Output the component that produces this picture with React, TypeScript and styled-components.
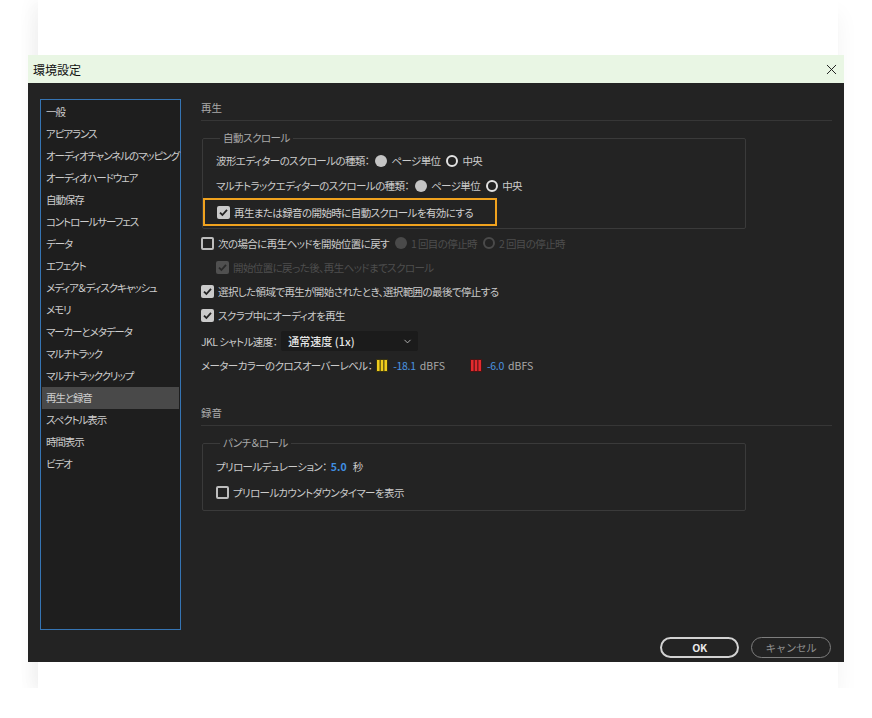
import styled, { createGlobalStyle } from 'styled-components';
import { X, ChevronDown } from 'lucide-react';

const GlobalStyle = createGlobalStyle`
  body {
    margin: 0;
    background: #ffffff;
    font-family: "Noto Sans CJK JP", "Noto Sans", sans-serif;
    font-feature-settings: "palt";
  }
`;

const Card = styled.div`
  margin-left: 38px;
  width: 800px;
  padding: 55px 0 26px;
  background: #ffffff;
  box-shadow: 0 14px 22px rgba(0, 0, 0, 0.05), -8px 0 14px rgba(0, 0, 0, 0.03);
`;

const Dialog = styled.div`
  margin: 0 -6px 0 -10px;
`;

const TitleBar = styled.div`
  height: 28px;
  display: flex;
  align-items: center;
  justify-content: space-between;
  padding: 0 4px 0 5px;
  background: #e9f6e4;
  color: #111;
  font-size: 12px;
`;

const Body = styled.div`
  height: 579px;
  box-sizing: border-box;
  padding: 16px 12px 4px 12px;
  background: #232323;
  display: flex;
  flex-direction: column;
`;

const Main = styled.div`
  height: 531px;
  display: flex;
  gap: 20px;
`;

const Sidebar = styled.ul`
  width: 141px;
  box-sizing: border-box;
  margin: 0;
  padding: 1px 0 0;
  list-style: none;
  background: #1e1e1e;
  border: 1px solid #3574b3;
`;

const NavItem = styled.li<{ $active?: boolean }>`
  height: 22px;
  line-height: 22px;
  margin: 0 1px;
  padding-left: 4px;
  font-size: 10.5px;
  letter-spacing: -1.1px;
  color: #cdcdcd;
  white-space: nowrap;
  background: ${p => (p.$active ? '#494949' : 'transparent')};
`;

const Content = styled.div`
  flex: 1;
  display: flex;
  flex-direction: column;
`;

const Heading = styled.div<{ $top?: number }>`
  margin-top: ${p => p.$top ?? 0}px;
  height: 18px;
  line-height: 18px;
  padding-bottom: 3px;
  font-size: 10.5px;
  color: #a9a9a9;
  border-bottom: 1px solid #363636;
`;

const Group = styled.fieldset<{ $top: number; $bottom: number }>`
  margin: ${p => p.$top}px 0 0 1px;
  width: 544px;
  min-width: 0;
  box-sizing: border-box;
  padding: 0 13px ${p => p.$bottom}px;
  border: 1px solid #3a3a3a;
  border-radius: 2px;
`;

const Legend = styled.legend`
  margin-left: 4px;
  padding: 0 3px;
  line-height: 16px;
  font-size: 10.5px;
  letter-spacing: -0.5px;
  color: #a9a9a9;
`;

const Row = styled.div<{ $h?: number; $indent?: number; $top?: number }>`
  height: ${p => p.$h ?? 24}px;
  margin-top: ${p => p.$top ?? 0}px;
  padding-left: ${p => p.$indent ?? 0}px;
  display: flex;
  align-items: center;
  font-size: 10.5px;
  letter-spacing: -0.6px;
  color: #cbcbcb;
  white-space: nowrap;
`;

const Highlight = styled.div`
  width: 294px;
  height: 28px;
  box-sizing: border-box;
  margin-left: -13px;
  padding-left: 12px;
  border: 2px solid #f0a21e;
  display: flex;
  align-items: center;
  font-size: 10.5px;
  letter-spacing: -0.6px;
  color: #d0d0d0;
  white-space: nowrap;
`;

const Box = styled.span<{ $checked?: boolean; $disabled?: boolean }>`
  width: 13px;
  height: 13px;
  box-sizing: border-box;
  margin-right: 4px;
  border-radius: 2px;
  display: inline-flex;
  align-items: center;
  justify-content: center;
  flex-shrink: 0;
  background: ${p => (p.$checked ? (p.$disabled ? '#505050' : '#cacaca') : 'transparent')};
  border: ${p => (p.$checked ? 'none' : '2px solid #bdbdbd')};
`;

const Radio = styled.span<{ $on?: boolean; $dim?: boolean }>`
  width: 12px;
  height: 12px;
  box-sizing: border-box;
  border-radius: 50%;
  margin: 0 4px 0 6px;
  flex-shrink: 0;
  background: ${p => (p.$on ? (p.$dim ? '#4a4a4a' : '#c4c4c4') : 'transparent')};
  border: ${p => (p.$on ? 'none' : `2px solid ${p.$dim ? '#4a4a4a' : '#e2e2e2'}`)};
`;

const Dim = styled.span`
  color: #4e4e4e;
`;

const Select = styled.div`
  width: 137px;
  height: 20px;
  box-sizing: border-box;
  margin-left: 4px;
  padding: 0 5px 0 7px;
  display: flex;
  align-items: center;
  justify-content: space-between;
  background: #1b1b1b;
  border-radius: 2px;
  color: #e6e6e6;
  font-size: 11px;
  letter-spacing: 0;
  font-weight: 500;
`;

const Value = styled.span`
  color: #4a93e0;
  margin: 0 4px 0 5px;
  letter-spacing: -0.3px;
`;

const Unit = styled.span`
  color: #a8a8a8;
  letter-spacing: 0;
`;

const Strong = styled.span`
  color: #3f8fe2;
  font-weight: 700;
  margin: 0 6px 0 4px;
  letter-spacing: 0;
`;

const Spacer = styled.span<{ $w: number }>`
  width: ${p => p.$w}px;
  flex-shrink: 0;
`;

const Footer = styled.div`
  margin-top: 7px;
  height: 21px;
  padding-right: 1px;
  display: flex;
  justify-content: flex-end;
  gap: 12px;
`;

const Button = styled.button<{ $primary?: boolean }>`
  width: ${p => (p.$primary ? 79 : 80)}px;
  height: 21px;
  box-sizing: border-box;
  padding: 0;
  border-radius: 11px;
  background: transparent;
  font-family: inherit;
  font-size: 10.5px;
  letter-spacing: -0.3px;
  font-weight: ${p => (p.$primary ? 700 : 400)};
  color: ${p => (p.$primary ? '#e8e8e8' : '#8f8f8f')};
  border: ${p => (p.$primary ? '2px solid #d2d2d2' : '1.5px solid #7e7e7e')};
`;

const Check = ({ checked, disabled }: { checked?: boolean; disabled?: boolean }) => (
  <Box $checked={checked} $disabled={disabled}>
    {checked && (
      <svg width="11" height="11" viewBox="0 0 11 11">
        <path d="M2 5.6 L4.4 8 L9 2.8" fill="none" stroke={disabled ? '#2a2a2a' : '#232323'} strokeWidth="1.8" />
      </svg>
    )}
  </Box>
);

const Meter = ({ color, edge }: { color: string; edge: string }) => (
  <svg width="12" height="13" viewBox="0 0 12 13" style={{ flexShrink: 0 }}>
    <rect x="0" y="0" width="12" height="13" fill={edge} />
    <rect x="1" y="1" width="2.6" height="11" fill={color} />
    <rect x="4.7" y="1" width="2.6" height="11" fill={color} />
    <rect x="8.4" y="1" width="2.6" height="11" fill={color} />
  </svg>
);

const navItems = [
  '一般',
  'アピアランス',
  'オーディオチャンネルのマッピング',
  'オーディオハードウェア',
  '自動保存',
  'コントロールサーフェス',
  'データ',
  'エフェクト',
  'メディア＆ディスクキャッシュ',
  'メモリ',
  'マーカーとメタデータ',
  'マルチトラック',
  'マルチトラッククリップ',
  '再生と録音',
  'スペクトル表示',
  '時間表示',
  'ビデオ',
];

export default function App() {
  return (
    <>
      <GlobalStyle />
      <Card>
        <Dialog>
          <TitleBar>
            <span>環境設定</span>
            <X size={17} strokeWidth={1.3} color="#111" />
          </TitleBar>
          <Body>
            <Main>
              <Sidebar>
                {navItems.map(item => (
                  <NavItem key={item} $active={item === '再生と録音'}>
                    {item}
                  </NavItem>
                ))}
              </Sidebar>
              <Content>
                <Heading>再生</Heading>
                <Group $top={9} $bottom={2}>
                  <Legend>自動スクロール</Legend>
                  <Row $top={2} $h={25}>
                    波形エディターのスクロールの種類：
                    <Radio $on />
                    ページ単位
                    <Radio />
                    中央
                  </Row>
                  <Row $h={25}>
                    マルチトラックエディターのスクロールの種類：
                    <Radio $on />
                    ページ単位
                    <Radio />
                    中央
                  </Row>
                  <Highlight>
                    <Check checked />
                    再生または録音の開始時に自動スクロールを有効にする
                  </Highlight>
                </Group>
                <Row $top={2}>
                  <Check />
                  次の場合に再生ヘッドを開始位置に戻す
                  <Radio $on $dim />
                  <Dim>1 回目の停止時</Dim>
                  <Radio $dim />
                  <Dim>2 回目の停止時</Dim>
                </Row>
                <Row $indent={15}>
                  <Check checked disabled />
                  <Dim>開始位置に戻った後、再生ヘッドまでスクロール</Dim>
                </Row>
                <Row>
                  <Check checked />
                  選択した領域で再生が開始されたとき、選択範囲の最後で停止する
                </Row>
                <Row>
                  <Check checked />
                  スクラブ中にオーディオを再生
                </Row>
                <Row $top={1} $h={26}>
                  JKL シャトル速度：
                  <Select>
                    <span>通常速度 (1x)</span>
                    <ChevronDown size={11} strokeWidth={2} color="#bbb" />
                  </Select>
                </Row>
                <Row $h={22}>
                  メーターカラーのクロスオーバーレベル：
                  <Spacer $w={4} />
                  <Meter color="#f0cd1c" edge="#3a3410" />
                  <Value>-18.1</Value>
                  <Unit>dBFS</Unit>
                  <Spacer $w={25} />
                  <Meter color="#e42a2e" edge="#4a1414" />
                  <Value>-6.0</Value>
                  <Unit>dBFS</Unit>
                </Row>
                <Heading $top={28}>録音</Heading>
                <Group $top={9} $bottom={5}>
                  <Legend>パンチ＆ロール</Legend>
                  <Row $top={2} $h={26}>
                    プリロールデュレーション：
                    <Strong>5.0</Strong>秒
                  </Row>
                  <Row $h={26}>
                    <Check />
                    プリロールカウントダウンタイマーを表示
                  </Row>
                </Group>
              </Content>
            </Main>
            <Footer>
              <Button $primary>OK</Button>
              <Button>キャンセル</Button>
            </Footer>
          </Body>
        </Dialog>
      </Card>
    </>
  );
}
